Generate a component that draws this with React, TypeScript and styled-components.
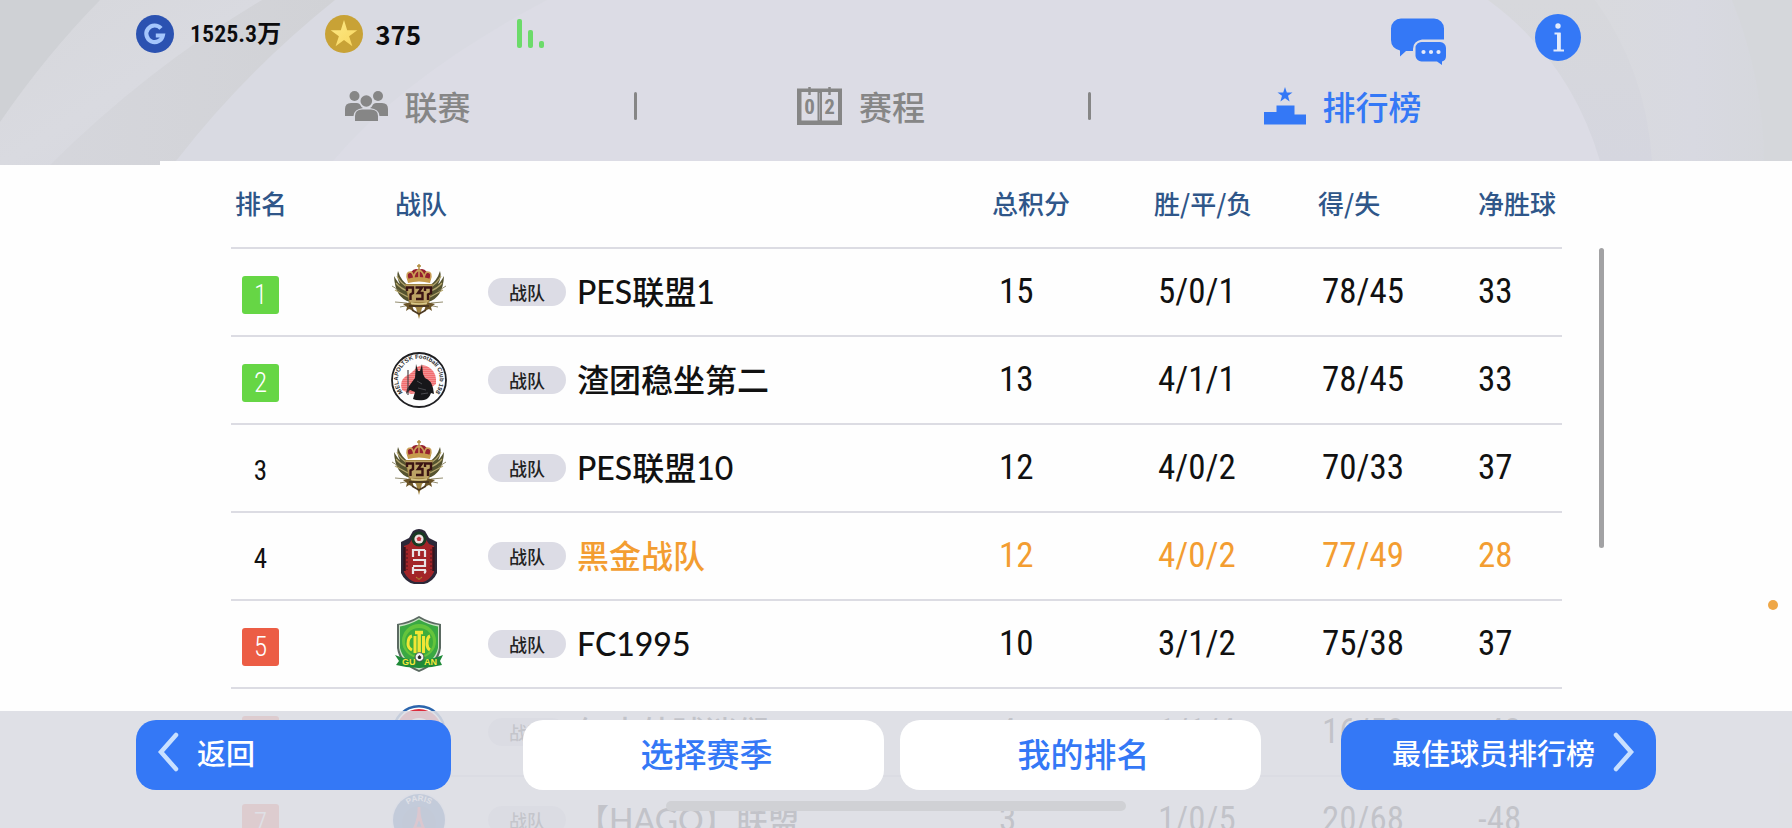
import React from 'react';
import styled, { createGlobalStyle } from 'styled-components';

const cjk = '"Noto Sans CJK SC", sans-serif';
const blue = '#3478f6';
const line = '#dcdce3';

const GlobalStyle = createGlobalStyle`
  *, *::before, *::after { box-sizing: border-box; }
  body { margin: 0; background: #fefefe; font-family: ${cjk}; color: #111; }
  button { font: inherit; border: 0; padding: 0; background: none; cursor: pointer; }
`;

const Page = styled.div`
  position: relative;
  display: flex;
  flex-direction: column;
  height: 100vh;
  overflow: hidden;
  background: #fefefe;
`;

const Header = styled.header`
  position: relative;
  z-index: 1;
  flex: none;
  padding-bottom: 17px;
`;

const Backdrop = styled.svg`
  position: absolute;
  top: 0;
  left: 0;
  z-index: -1;
  width: 100%;
  height: 165px;
`;

const TopBar = styled.div`
  display: flex;
  justify-content: space-between;
  height: 68px;
  padding: 0 211px 0 136px;
`;

const Wallet = styled.div`
  display: flex;
  align-items: center;
  gap: 44px;
`;

const Balance = styled.div<{ $heavy?: boolean }>`
  display: flex;
  align-items: center;
  gap: ${p => (p.$heavy ? 12 : 16)}px;
  color: #0c0c0e;
  font-family: ${p => (p.$heavy ? '' : '"Roboto Condensed", ')}${cjk};
  font-size: ${p => (p.$heavy ? 26 : 24)}px;
  font-weight: ${p => (p.$heavy ? 700 : 600)};
  line-height: 32px;
`;

const Signal = styled.svg`
  margin-left: 52px;
`;

const Actions = styled.div`
  display: flex;
  align-items: flex-start;
  gap: 88px;
  padding-top: 14px;
`;

const IconButton = styled.button`
  display: block;
  line-height: 0;
`;

const Tabs = styled.nav`
  display: grid;
  grid-template-columns: 453fr 454fr 509fr;
  align-items: center;
  height: 76px;
  padding: 0 195px 0 181px;
`;

const Tab = styled.a<{ $active?: boolean }>`
  position: relative;
  display: flex;
  align-items: center;
  justify-content: center;
  gap: 17px;
  color: ${p => (p.$active ? blue : '#868686')};
  font-size: 33px;
  font-weight: 500;
  line-height: 40px;
  text-decoration: none;

  &:not(:first-child)::before {
    content: '';
    position: absolute;
    left: 0;
    top: 6px;
    width: 3px;
    height: 28px;
    border-radius: 2px;
    background: #868686;
  }
`;

const Board = styled.main`
  display: flex;
  flex: 1;
  align-items: flex-start;
  min-height: 0;
  padding: 0 188px 0 231px;
  overflow: hidden;
`;

const Table = styled.table`
  flex: 1;
  table-layout: fixed;
  border-collapse: separate;
  border-spacing: 0;
`;

const Th = styled.th<{ $width?: number }>`
  width: ${p => (p.$width ? `${p.$width}px` : 'auto')};
  height: 88px;
  padding: 0 0 4px 4px;
  border-bottom: 2px solid ${line};
  color: #2f5689;
  font-size: 26px;
  font-weight: 500;
  text-align: left;
  white-space: nowrap;
`;

const Row = styled.tr<{ $mine?: boolean }>`
  color: ${p => (p.$mine ? '#f39d31' : '#111')};
`;

const Td = styled.td<{ $indent: number }>`
  height: 88px;
  padding: 0 0 0 ${p => p.$indent}px;
  border-bottom: 2px solid ${line};
  font-family: "Roboto Condensed", ${cjk};
  font-size: 35px;
  line-height: 40px;
  white-space: nowrap;
`;

const Rank = styled.div<{ $tone?: string }>`
  width: 37px;
  height: 38px;
  margin-top: 6px;
  border-radius: 3px;
  background: ${p => p.$tone ?? 'transparent'};
  color: ${p => (p.$tone ? '#fff' : '#111')};
  font-size: 27px;
  font-weight: ${p => (p.$tone ? 300 : 400)};
  line-height: 38px;
  text-align: center;
`;

const Team = styled.div`
  display: flex;
  align-items: center;
`;

const Pill = styled.span`
  width: 78px;
  height: 28px;
  margin: 0 11px 0 41px;
  border-radius: 14px;
  background: #dcdce5;
  color: #222;
  font-family: ${cjk};
  font-size: 18px;
  font-weight: 500;
  line-height: 28px;
  text-align: center;
`;

const TeamName = styled.span`
  font-family: Lato, ${cjk};
  font-size: 32px;
  font-weight: 500;
`;

const ScrollThumb = styled.div`
  flex: none;
  width: 5px;
  height: 300px;
  margin: 87px 0 0 37px;
  border-radius: 3px;
  background: #a2a2a4;
`;

const BottomBar = styled.footer`
  position: absolute;
  right: 0;
  bottom: 0;
  left: 0;
  display: grid;
  grid-template-columns: 315px 1fr 315px;
  height: 117px;
  padding: 9px 136px 0;
  background: rgba(219, 220, 226, 0.88);
`;

const Middle = styled.div`
  display: flex;
  gap: 16px;
  padding: 0 80px 0 72px;
`;

const Action = styled.button<{ $primary?: boolean }>`
  display: flex;
  flex: 1;
  align-items: center;
  justify-content: center;
  height: 70px;
  padding: 0 0 4px 6px;
  border-radius: 20px;
  background: ${p => (p.$primary ? blue : '#fff')};
  color: ${p => (p.$primary ? '#fff' : blue)};
  font-size: ${p => (p.$primary ? 29 : 33)}px;
  font-weight: 500;
  line-height: 40px;
  white-space: nowrap;
`;

const BackAction = styled(Action)`
  justify-content: flex-start;
  gap: 17px;
  padding: 0 0 6px 20px;
`;

const ForwardAction = styled(Action)`
  justify-content: flex-end;
  gap: 17px;
  padding: 0 20px 6px 0;
`;

const HomeIndicator = styled.div`
  position: absolute;
  bottom: 17px;
  left: 50%;
  width: 460px;
  height: 10px;
  border-radius: 5px;
  background: #d0d1d5;
  transform: translateX(-50%);
`;

const AssistDot = styled.span`
  position: absolute;
  right: 14px;
  bottom: 218px;
  width: 10px;
  height: 10px;
  border-radius: 50%;
  background: #efa747;
`;

const HeaderBackdrop = () => (
  <Backdrop viewBox="0 0 1792 165" preserveAspectRatio="none" aria-hidden="true">
    <defs>
      <linearGradient id="bandA" x1="0" y1="0" x2="1" y2="1">
        <stop offset="0" stopColor="#d6d7db" />
        <stop offset="0.5" stopColor="#d9dae0" />
        <stop offset="1" stopColor="#d5d6de" />
      </linearGradient>
      <linearGradient id="bandB" x1="0" y1="0" x2="1" y2="0">
        <stop offset="0" stopColor="#d6d7dd" />
        <stop offset="1" stopColor="#d1d2d6" />
      </linearGradient>
      <linearGradient id="bandC" x1="0" y1="0" x2="0" y2="1">
        <stop offset="0" stopColor="#d7d8dc" />
        <stop offset="1" stopColor="#d5d6df" />
      </linearGradient>
      <linearGradient id="bandD" x1="0" y1="0" x2="1" y2="0">
        <stop offset="0" stopColor="#d9dade" />
        <stop offset="0.5" stopColor="#d8d9e1" />
        <stop offset="1" stopColor="#d5d7db" />
      </linearGradient>
    </defs>
    <path d="M0 0H1792V161H160V165H0Z" fill="#dcdce5" />
    <path d="M0 0H547Q405 75 333 161H160V165H0Z" fill="#d9dae2" />
    <path d="M0 0H335Q245 72 176 161H160V165H0Z" fill="url(#bandB)" />
    <path d="M0 0H262Q148 68 50 165H0Z" fill="url(#bandA)" />
    <path d="M0 0H100Q46 55 0 122Z" fill="#cfd1d5" />
    <path d="M1488 0Q1570 60 1600 161H1792V0Z" fill="url(#bandC)" />
    <path d="M1595 0Q1646 70 1652 161H1792V0Z" fill="url(#bandD)" />
    <path d="M1732 0Q1764 80 1764 161H1792V0Z" fill="#d5d7db" />
  </Backdrop>
);

const CoinG = () => (
  <svg width="38" height="38" viewBox="0 0 38 38" aria-hidden="true">
    <circle cx="19" cy="19" r="19" fill="#2b52b1" />
    <path d="M25 13.400A8.300 8.300 0 1 0 26.800 20.500H19.800" fill="none" stroke="#a4c6fc" strokeWidth="4.200" />
  </svg>
);

const CoinStar = () => (
  <svg width="38" height="38" viewBox="0 0 38 38" aria-hidden="true">
    <defs>
      <linearGradient id="star" x1="0" y1="0" x2="1" y2="1">
        <stop offset="0" stopColor="#fdea86" />
        <stop offset="1" stopColor="#f8d660" />
      </linearGradient>
    </defs>
    <circle cx="19" cy="19" r="19" fill="#c8a236" />
    <path d="M19 5L22.2 15.3H32.3L24.1 21.3L27.4 31.2L19 25.1L10.6 31.2L13.9 21.3L5.7 15.3H15.8Z" fill="url(#star)" />
  </svg>
);

const SignalIcon = () => (
  <Signal width="28" height="30" viewBox="0 0 28 30" role="img" aria-label="signal">
    <g fill="#6cdb6a">
      <rect x="0" y="0" width="5" height="29" rx="2" />
      <rect x="11" y="11" width="5" height="18" rx="2" />
      <rect x="22" y="22" width="5" height="7" rx="2" />
    </g>
  </Signal>
);

const ChatIcon = () => (
  <svg width="56" height="52" viewBox="0 0 56 52" aria-hidden="true">
    <path d="M10 4.500H43A10 10 0 0 1 53 14.500V25.500H31Q22 27 22 35V37H15L9 42.500V36.500Q0 34 0 26V14.500A10 10 0 0 1 10 4.500Z" fill={blue} />
    <path d="M31 28H49A6 6 0 0 1 55 34V42Q55 46.500 51 47.500V51L46 47.500H31A6 6 0 0 1 24.500 42V34A6 6 0 0 1 31 28Z" fill={blue} />
    <g fill="#e6ebfa">
      <circle cx="32.500" cy="38" r="2.100" />
      <circle cx="40" cy="38" r="2.100" />
      <circle cx="47.500" cy="38" r="2.100" />
    </g>
  </svg>
);

const InfoIcon = () => (
  <svg width="46" height="47" viewBox="0 0 46 47" aria-hidden="true">
    <ellipse cx="23" cy="23.500" rx="23" ry="23.500" fill={blue} />
    <circle cx="23" cy="12" r="2.700" fill="#e3ebfc" />
    <path d="M19.500 19.500H24.500V36M18.500 36.500H29" fill="none" stroke="#e3ebfc" strokeWidth="2.200" />
    <path d="M23.800 19V36" stroke="#e3ebfc" strokeWidth="3.600" />
  </svg>
);

const PeopleIcon = () => (
  <svg width="43" height="32" viewBox="0 0 43 32" fill="#868686" aria-hidden="true">
    <circle cx="9.500" cy="6" r="5" />
    <circle cx="33" cy="6" r="5" />
    <path d="M0 26V19Q0 13 6 13H12Q14 13 15 14.500Q16 17 18 18Q9 19 8.500 26Z" />
    <path d="M43 26V19Q43 13 37 13H31Q29 13 28 14.500Q27 17 25 18Q34 19 34.500 26Z" />
    <circle cx="21.300" cy="11" r="5.800" />
    <path d="M10 31V26Q10 19.500 17 19.500H26Q33 19.500 33 26V31Z" />
  </svg>
);

const CalendarIcon = () => (
  <svg width="45" height="38" viewBox="0 0 45 38" aria-hidden="true">
    <path fillRule="evenodd" d="M0 1.500H45V38H0ZM4.500 5V33.500H20.500V5ZM25 5V33.500H41V5Z" fill="#868686" />
    <path d="M12.500 0V8M32.500 0V8" stroke="#868686" strokeWidth="2.500" />
    <path d="M22.500 6V33" stroke="#a9a9ad" strokeWidth="1" />
    <g fill="#868686" fontFamily="Roboto Condensed" fontSize="21" fontWeight="700" textAnchor="middle">
      <text x="12.500" y="27">0</text>
      <text x="32.500" y="27">2</text>
    </g>
  </svg>
);

const PodiumIcon = () => (
  <svg width="42" height="38" viewBox="0 0 42 38" fill={blue} aria-hidden="true">
    <path d="M21 0L22.800 5.400H28.500L24 8.800L25.600 14.500L21 11.200L16.400 14.500L18 8.800L13.500 5.400H19.200Z" />
    <path d="M0 25H12.500V18.500H30.500V27.500H42V37.500H0Z" />
  </svg>
);

const Chevron = ({ d }: { d: string }) => (
  <svg width="24" height="40" viewBox="0 0 24 40" fill="none" stroke="#c9e0ff" strokeWidth="4.500" strokeLinecap="round" aria-hidden="true">
    <path d={d} />
  </svg>
);

const CrestSvg = ({ children }: { children: React.ReactNode }) => (
  <svg width="56" height="56" viewBox="0 0 56 56" aria-hidden="true">{children}</svg>
);

const wing = (
  <g>
    <path d="M19 38Q4 34 3 12Q7 19 9 20Q5 13 7 7Q10 17 18 22Z" fill="#55532f" />
    <path d="M5 19Q10 25 17 27M4 26L17 33M6 12Q10 20 17 23" stroke="#b4a66f" strokeWidth="1.200" fill="none" />
    <path d="M1 22L9 27M4 38L16 39M9 43L19 41" stroke="#77704a" strokeWidth="0.800" fill="none" />
    <path d="M12 40L20 38L23 47L18 45L15 47L16 43Z" fill="#6b5427" />
  </g>
);

const PesCrest = () => (
  <CrestSvg>
    {wing}
    <g transform="matrix(-1 0 0 1 56 0)">{wing}</g>
    <path d="M14 20H42L38 38L31 44L28 55L25 44L18 38Z" fill="#a08544" />
    <path d="M15 21H41L37 38H19Z" fill="#bca265" />
    <path d="M18 42H38M21 46L28 50L35 46" stroke="#4b3820" strokeWidth="1.800" fill="none" />
    <path d="M17 16Q14 8 20 8Q24 3 28 6Q32 3 36 8Q42 8 39 16Z" fill="#96212e" />
    <path d="M17 16Q14 8 20 8Q22 9 23 14M39 16Q42 8 36 8Q34 9 33 14M28 5V15M23 14Q23 8 28 6Q33 8 33 14" stroke="#cba158" strokeWidth="1.500" fill="none" />
    <path d="M16 15Q28 11 40 15L39 19Q28 16 17 19Z" fill="#c69b4c" />
    <path d="M28 0V6M26 2H30" stroke="#b08a3b" strokeWidth="1.400" />
    <g fill="none" stroke="#3a1413" strokeWidth="2.400">
      <path d="M16 27V23.500H22V29L19.500 30.500V36" />
      <path d="M24.500 23.500H31L27 29H31.500V35H25" />
      <path d="M34 27V23.500H40V29L37 30.500V36" />
    </g>
    <path d="M20 39Q28 41 36 39" stroke="#d9c88b" strokeWidth="1.600" fill="none" />
  </CrestSvg>
);

const AnubisCrest = () => (
  <CrestSvg>
    <defs>
      <path id="ring" d="M11.800 40.500A20.800 20.800 0 1 1 44.200 40.500" />
      <pattern id="stripes" width="3" height="2" patternUnits="userSpaceOnUse">
        <rect width="3" height="2" fill="#f06e70" />
        <rect width="3" height="1" fill="#f58f90" />
      </pattern>
    </defs>
    <circle cx="28" cy="28" r="27" fill="#fdfdfd" stroke="#1f1f22" strokeWidth="1.800" />
    <path d="M11 38Q8 29 15 24Q20 22 26 15Q33 11 39 16Q46 21 45 32L34 40L20 42Z" fill="url(#stripes)" />
    <text fontFamily="Liberation Sans" fontSize="6" fontWeight="700" fill="#2b2b2d">
      <textPath href="#ring">MELAPOLTSK Football Club 1987</textPath>
    </text>
    <path d="M25 12L27 19H29L31 12L32 22L34 26Q40 28 42 36L43 42L40 41Q38 47 33 48Q26 49 22 47L24 40L19 38L15 42L16 37L21 30L24 26Z" fill="#17171a" />
    <path d="M17 18V43" stroke="#4a4146" strokeWidth="1.200" />
    <path d="M26 29L31 32M27 36L35 38M30 42L37 41" stroke="#4b4b50" strokeWidth="1" />
  </CrestSvg>
);

const EulCrest = () => (
  <CrestSvg>
    <path d="M22 3Q28 -1 34 3L38 10L46 14V45Q42 54 33 56H23Q14 54 10 45V14L18 10Z" fill="#2c2839" />
    <path d="M18 16L22 10H34L38 16L43 18V44Q39 52 32 54H24Q17 52 13 44V18Z" fill="#a32428" />
    <path d="M13.500 19V43M42.500 19V43" stroke="#35131d" strokeWidth="2.400" />
    <path d="M16 21V42M40 21V42" stroke="#671a22" strokeWidth="1.400" strokeDasharray="2 2" />
    <circle cx="28" cy="11" r="7.500" fill="#183a22" />
    <circle cx="28" cy="11" r="4.600" fill="#efdfe0" />
    <path d="M28 8.500L30.400 10.200L29.500 13H26.500L25.600 10.200Z" fill="#c33641" />
    <g fill="none" stroke="#e8e3e6" strokeWidth="2.200">
      <path d="M34 22H22V29M28 22V28M34 22V29" />
      <path d="M22 32H34V38H22" />
      <path d="M22 42H34Q35 44 33 45M22 39V46" />
    </g>
    <path d="M25 49Q28 54 31 49L28 51Z" fill="#201019" stroke="#c78635" strokeWidth="0.700" />
  </CrestSvg>
);

const GuoanCrest = () => (
  <CrestSvg>
    <path d="M28 0Q38 6 50 8V32Q48 48 28 56Q8 48 6 32V8Q18 6 28 0Z" fill="#5b6a62" />
    <path d="M28 2Q38 8 48 9V32Q46 46 28 54Q10 46 8 32V9Q18 8 28 2Z" fill="#c9e2c4" />
    <path d="M28 3.500Q38 9 47 10.500V32Q44 45 28 52Q12 45 9 32V10.500Q18 9 28 3.500Z" fill="#3aa843" />
    <circle cx="28" cy="25" r="17" fill="#64c43c" />
    <circle cx="28" cy="26" r="14" fill="#3fad3c" />
    <g fill="none" stroke="#f2e635" strokeWidth="3">
      <path d="M21 20Q17 21 17 28Q17 32 21 34" />
      <path d="M39 20Q36 21 36 28Q36 32 39 34" />
      <path d="M24 20V37M32.500 20V37" />
      <path d="M24 16.500H32M28.200 16V37" strokeWidth="3.400" />
    </g>
    <path d="M4 39Q28 49 52 39L49 45L51 49Q28 55 5 49L8 45Z" fill="#1f8a38" />
    <g fill="#f4e93a" fontFamily="Liberation Sans" fontSize="9" fontWeight="700">
      <text x="11" y="49">GU</text>
      <text x="33" y="49">AN</text>
    </g>
    <circle cx="28.500" cy="41" r="4.400" fill="#f4f4f4" stroke="#3a3a3a" strokeWidth="0.800" />
    <path d="M28.500 39L30.500 41L29.500 43H27.500L26.500 41Z" fill="#2a2a2a" />
  </CrestSvg>
);

const MunichCrest = () => (
  <CrestSvg>
    <circle cx="28" cy="28" r="27" fill="#2b65ad" />
    <circle cx="28" cy="28" r="24.500" fill="#fff" />
    <circle cx="28" cy="28" r="23" fill="#dc2b3c" />
    <circle cx="28" cy="28" r="14" fill="#fff" />
    <circle cx="28" cy="28" r="12" fill="#3b7cc4" />
  </CrestSvg>
);

const ParisCrest = () => (
  <CrestSvg>
    <defs><path id="arc" d="M9 28A19 19 0 0 1 47 28" /></defs>
    <circle cx="28" cy="28" r="27.500" fill="#e8eef8" />
    <circle cx="28" cy="28" r="26" fill="#1f569e" />
    <text fontFamily="Liberation Sans" fontSize="8" fontWeight="700" fill="#fff" textAnchor="middle">
      <textPath href="#arc" startOffset="50%">PARIS</textPath>
    </text>
    <circle cx="28" cy="31" r="17" fill="#1b4a8d" />
    <path d="M28 15Q28 32 19 43M28 15Q28 32 37 43M23 36H33M25 28H31" stroke="#de3346" strokeWidth="2.600" fill="none" />
  </CrestSvg>
);

const green = '#66d645';
const red = '#ec5d45';

const standings = [
  { rank: 1, tone: green, Crest: PesCrest, name: 'PES联盟1', points: 15, record: '5/0/1', goals: '78/45', diff: 33 },
  { rank: 2, tone: green, Crest: AnubisCrest, name: '渣团稳坐第二', points: 13, record: '4/1/1', goals: '78/45', diff: 33 },
  { rank: 3, Crest: PesCrest, name: 'PES联盟10', points: 12, record: '4/0/2', goals: '70/33', diff: 37 },
  { rank: 4, Crest: EulCrest, name: '黑金战队', points: 12, record: '4/0/2', goals: '77/49', diff: 28, mine: true },
  { rank: 5, tone: red, Crest: GuoanCrest, name: 'FC1995', points: 10, record: '3/1/2', goals: '75/38', diff: 37 },
  { rank: 6, tone: red, Crest: MunichCrest, name: '红大外球迷们', points: 4, record: '1/1/4', goals: '16/58', diff: -42 },
  { rank: 7, tone: red, Crest: ParisCrest, name: '【HAGO】联盟', points: 3, record: '1/0/5', goals: '20/68', diff: -48 },
];

export default function App() {
  return (
    <Page>
      <GlobalStyle />
      <Header>
        <HeaderBackdrop />
        <TopBar>
          <Wallet>
            <Balance><CoinG />1525.3万</Balance>
            <Balance $heavy><CoinStar />375</Balance>
            <SignalIcon />
          </Wallet>
          <Actions>
            <IconButton aria-label="聊天"><ChatIcon /></IconButton>
            <IconButton aria-label="信息"><InfoIcon /></IconButton>
          </Actions>
        </TopBar>
        <Tabs>
          <Tab href="#league"><PeopleIcon />联赛</Tab>
          <Tab href="#schedule"><CalendarIcon />赛程</Tab>
          <Tab href="#ranking" $active aria-current="page"><PodiumIcon />排行榜</Tab>
        </Tabs>
      </Header>

      <Board>
        <Table>
          <thead>
            <tr>
              <Th $width={160}>排名</Th>
              <Th>战队</Th>
              <Th $width={162}>总积分</Th>
              <Th $width={164}>胜/平/负</Th>
              <Th $width={160}>得/失</Th>
              <Th $width={88}>净胜球</Th>
            </tr>
          </thead>
          <tbody>
            {standings.map(({ Crest, ...s }) => (
              <Row key={s.rank} $mine={s.mine}>
                <Td $indent={11}><Rank $tone={s.tone}>{s.rank}</Rank></Td>
                <Td $indent={0}>
                  <Team>
                    <Crest />
                    <Pill>战队</Pill>
                    <TeamName>{s.name}</TeamName>
                  </Team>
                </Td>
                <Td $indent={11}>{s.points}</Td>
                <Td $indent={8}>{s.record}</Td>
                <Td $indent={8}>{s.goals}</Td>
                <Td $indent={4}>{s.diff}</Td>
              </Row>
            ))}
          </tbody>
        </Table>
        <ScrollThumb />
      </Board>

      <AssistDot />
      <BottomBar>
        <BackAction $primary><Chevron d="M20 3L5 20L20 37" />返回</BackAction>
        <Middle>
          <Action>选择赛季</Action>
          <Action>我的排名</Action>
        </Middle>
        <ForwardAction $primary>最佳球员排行榜<Chevron d="M4 3L19 20L4 37" /></ForwardAction>
        <HomeIndicator />
      </BottomBar>
    </Page>
  );
}
